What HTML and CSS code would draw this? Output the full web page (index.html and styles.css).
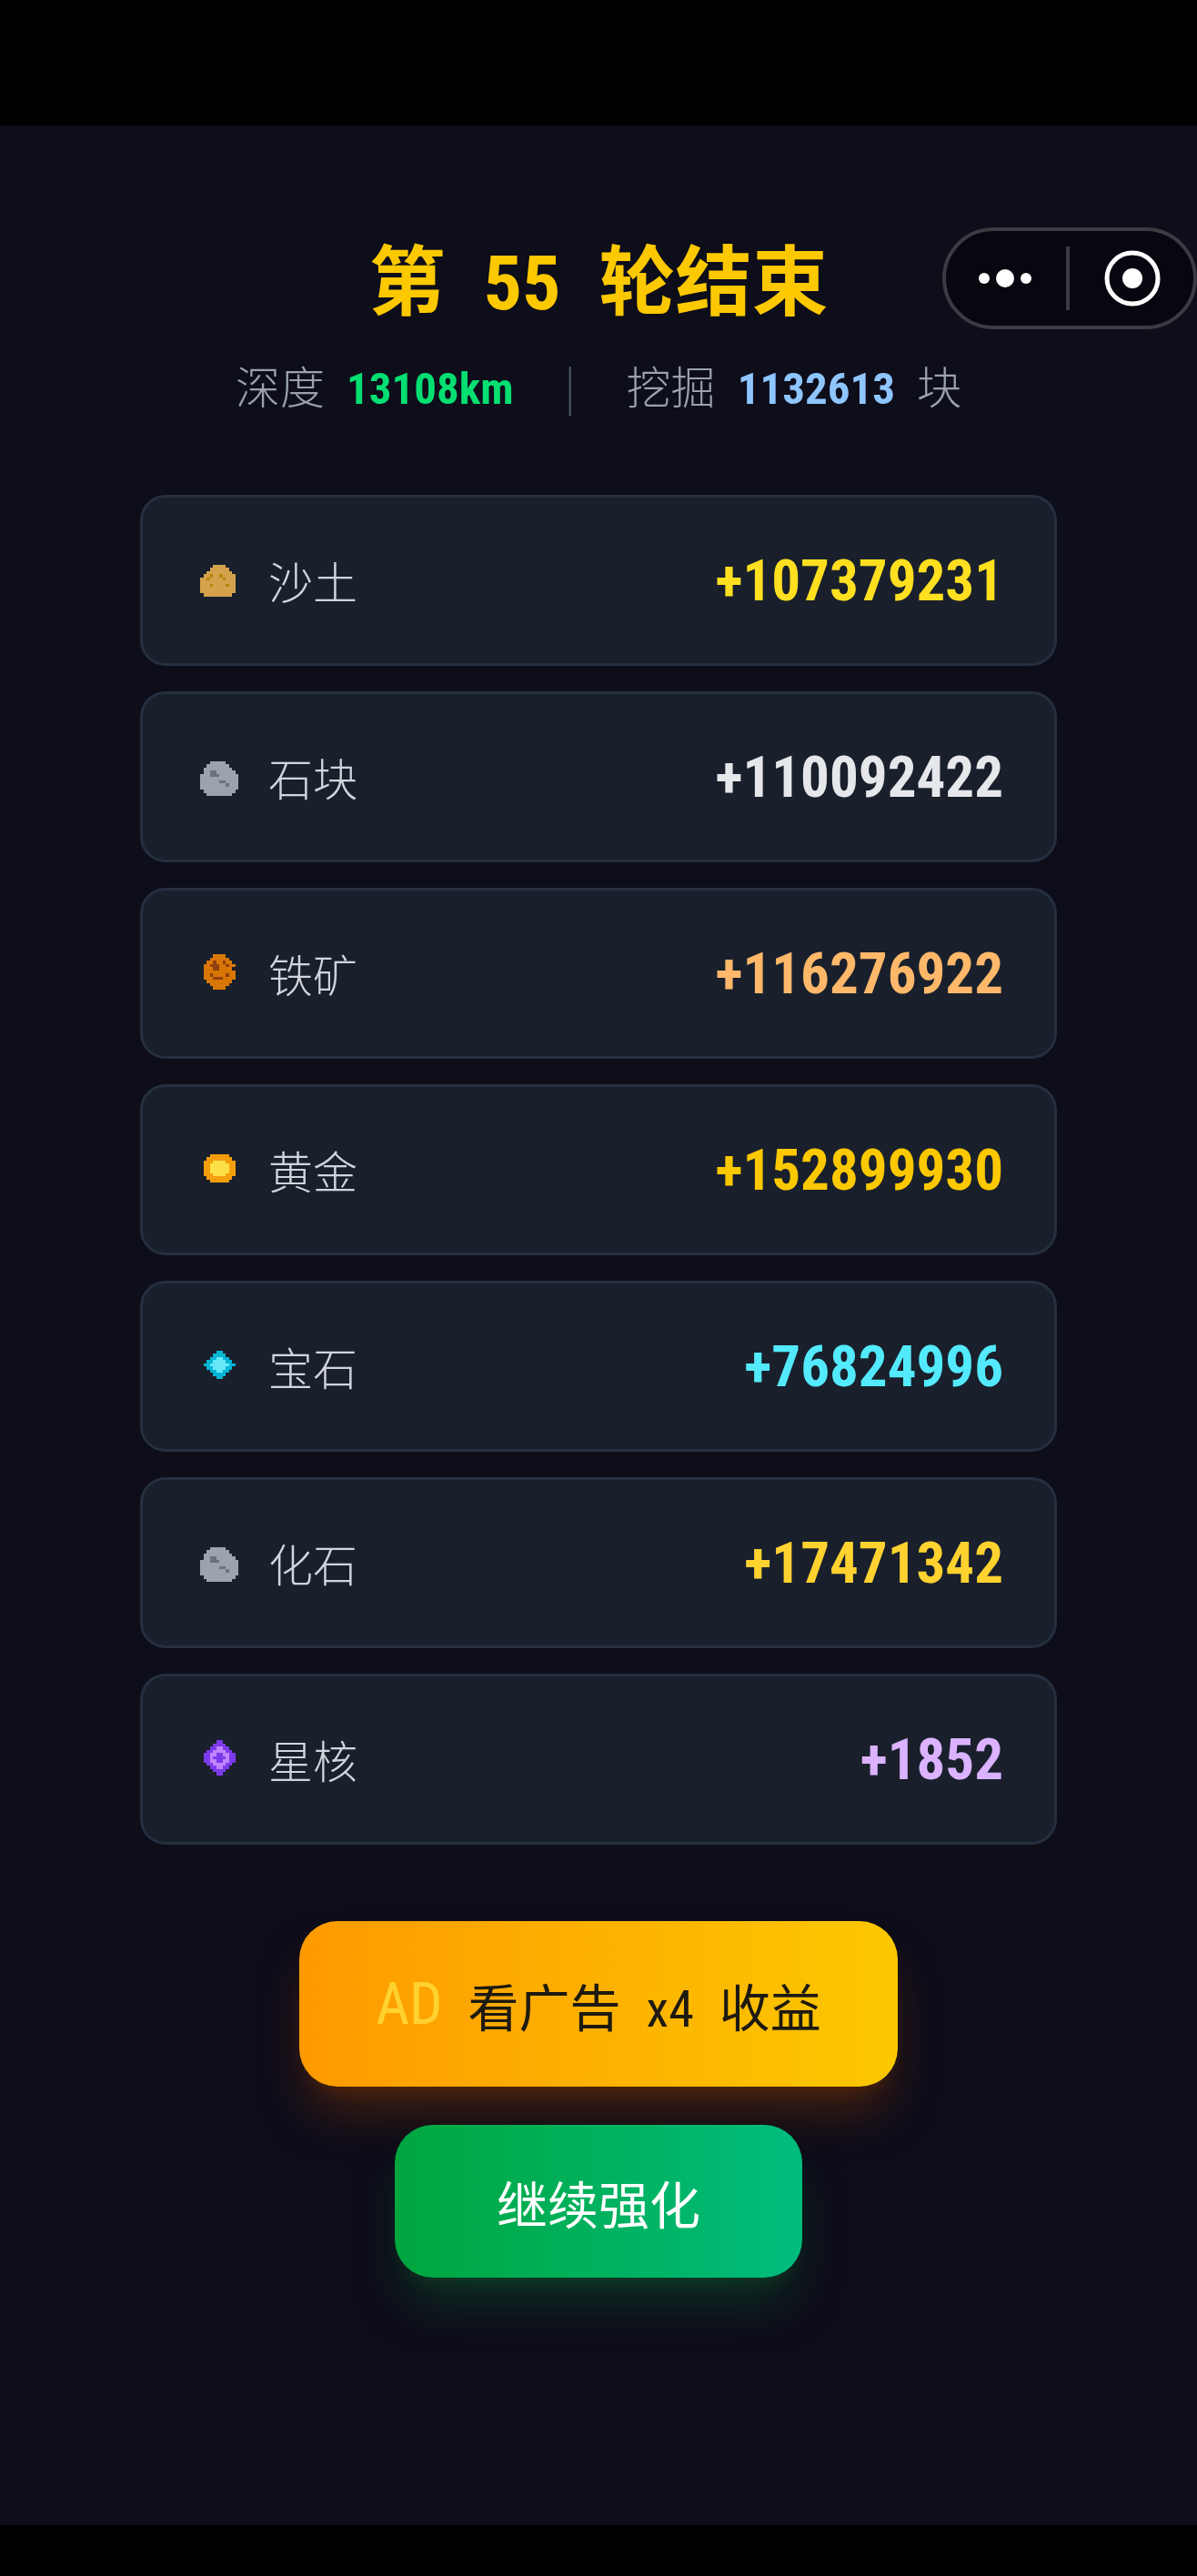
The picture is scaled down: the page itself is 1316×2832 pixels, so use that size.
FILE: index.html
```html
<!DOCTYPE html>
<html lang="zh-CN">
<head>
    <meta charset="UTF-8">
    <meta name="viewport" content="width=device-width, initial-scale=1.0">
    <title>第 55 轮结束</title>
    <link rel="stylesheet" href="styles.css">
</head>
<body>
    <!-- 16x16 像素图标 -->
    <svg class="sprites" aria-hidden="true">
        <symbol id="sand" viewBox="0 0 16 16">
            <path fill="#d4a24c" d="M6 3h4v1h1v1h1v1h1v6h-1v1H3v-1H2V7h1V6h1V5h1V4h1z"/>
            <path fill="#b8860b" d="M5 6h1v1H5zM8 6h1v1H8zM4 7h1v1H4zM9 7h1v1H9zM5 9h1v1H5zM10 9h1v1h-1z"/>
        </symbol>
        <symbol id="stone" viewBox="0 0 16 16">
            <path fill="#9ca3af" d="M5 3h5v1h1v1h1v1h1v1h1v5h-1v1h-1v1H4v-1H3v-1H2V7h1V5h1V4h1z"/>
            <path fill="#6b7280" d="M5 6h2v1h1v1H5zM8 9h2v1H8zM10 10h1v1h-1z"/>
        </symbol>
        <symbol id="iron" viewBox="0 0 16 16">
            <path fill="#d97706" d="M6 2h4v1h1v1h1v1h1v1h-1v1h1v3h-1v1h-1v1h-1v1H6v-1H5v-1H4v-1H3V5h1V4h1V3h1z"/>
            <path fill="#92400e" d="M6 4h1v1h1v2H6V6H5V5h1zM9 4h1v1H9zM10 5h1v1h-1zM5 8h1v1H5zM10 8h1v1h-1zM6 9h3v1H6z"/>
        </symbol>
        <symbol id="gold" viewBox="0 0 16 16">
            <path fill="#f59e0b" d="M5 3h6v1h1v1h1v5h-1v1h-1v1H5v-1H4v-1H3V5h1V4h1z"/>
            <path fill="#fde047" d="M6 5h4v1h1v3h-1v1H6V9H5V6h1z"/>
        </symbol>
        <symbol id="gem" viewBox="0 0 16 16">
            <path fill="#06b6d4" d="M7 3h2v1h1v1h1v1h1v1h1v1h-1v1h-1v1h-1v1H9v1H7v-1H6v-1H5V9H4V8H3V7h1V6h1V5h1V4h1z"/>
            <path fill="#67e8f9" d="M7 5h2v1h1v1h1v1h-1v1H9v1H7V9H6V8H5V7h1V6h1z"/>
        </symbol>
        <symbol id="core" viewBox="0 0 16 16">
            <path fill="#7c3aed" d="M7 2h2v1h1v1h1v1h1v1h1v3h-1v1h-1v1h-1v1H9v1H7v-1H6v-1H5v-1H4V9H3V6h1V5h1V4h1V3h1z"/>
            <path fill="#c084fc" d="M7 4h2v1h1v1h1v3h-1v1H9v1H7v-1H6V9H5V6h1V5h1z"/>
            <path fill="#7c3aed" d="M7 6h2v1h1v1H9v1H7V8H6V7h1z"/>
        </symbol>
    </svg>

    <div class="capsule">
        <button type="button" class="more" aria-label="更多">
            <svg width="60" height="64" viewBox="0 0 60 64" fill="#fff">
                <circle cx="6" cy="32" r="6"/><circle cx="29" cy="32" r="10"/><circle cx="52" cy="32" r="6"/>
            </svg>
        </button>
        <span class="capsule-line"></span>
        <button type="button" class="close" aria-label="关闭">
            <svg width="64" height="64" viewBox="0 0 64 64">
                <circle cx="33" cy="32" r="28" fill="none" stroke="#fff" stroke-width="5"/>
                <circle cx="33" cy="32" r="11" fill="#fff"/>
            </svg>
        </button>
    </div>

    <main class="result">
        <h1 class="title"><span>第</span><span class="num">55</span><span>轮结束</span></h1>
        <div class="stats">
            <p class="stat"><span>深度</span><b class="num depth">13108km</b></p>
            <span class="split">|</span>
            <p class="stat"><span>挖掘</span><b class="num blocks">1132613</b><span>块</span></p>
        </div>

        <ul class="loot">
            <li class="card"><svg class="icon"><use href="#sand"/></svg><span class="name">沙土</span><b class="num value sand">+107379231</b></li>
            <li class="card"><svg class="icon"><use href="#stone"/></svg><span class="name">石块</span><b class="num value stone">+110092422</b></li>
            <li class="card"><svg class="icon"><use href="#iron"/></svg><span class="name">铁矿</span><b class="num value iron">+116276922</b></li>
            <li class="card"><svg class="icon"><use href="#gold"/></svg><span class="name">黄金</span><b class="num value gold">+152899930</b></li>
            <li class="card"><svg class="icon"><use href="#gem"/></svg><span class="name">宝石</span><b class="num value gem">+76824996</b></li>
            <li class="card"><svg class="icon"><use href="#stone"/></svg><span class="name">化石</span><b class="num value fossil">+17471342</b></li>
            <li class="card"><svg class="icon"><use href="#core"/></svg><span class="name">星核</span><b class="num value core">+1852</b></li>
        </ul>

        <div class="actions">
            <button type="button" class="btn btn-ad">
                <span class="num ad">AD</span>
                <span class="ad-text"><span>看广告</span><span class="num">x4</span><span>收益</span></span>
            </button>
            <button type="button" class="btn btn-next">继续强化</button>
        </div>
    </main>
</body>
</html>
```

FILE: styles.css
```css
* {
    box-sizing: border-box;
}
body {
    margin: 0;
    min-height: 100vh;
    display: flex;
    flex-direction: column;
    position: relative;
    font-family: "Noto Sans CJK SC", sans-serif;
    background: #0e0d1a;
    border-top: 138px solid #000;
    border-bottom: 56px solid #000;
}
h1, p, ul {
    margin: 0;
    padding: 0;
}
button {
    font-family: inherit;
    border: none;
    padding: 0;
    cursor: pointer;
}
.sprites {
    position: absolute;
    width: 0;
    height: 0;
}
.num {
    font-family: "Roboto Condensed", "Liberation Sans Narrow", Roboto, sans-serif;
}

/* 右上角胶囊按钮 */
.capsule {
    position: absolute;
    top: 112px;
    right: 0;
    width: 280px;
    height: 112px;
    display: flex;
    align-items: center;
    border: 4px solid #3c3b42;
    border-radius: 56px;
    background: #06070f;
}
.capsule button {
    display: flex;
    justify-content: center;
    background: none;
}
.more {
    width: 132px;
}
.close {
    flex: 1;
}
.capsule-line {
    width: 4px;
    height: 70px;
    background: #3c3b42;
}

.result {
    flex: 1;
    padding: 110px 154px 0;
}
.title {
    display: flex;
    justify-content: center;
    align-items: baseline;
    gap: 42px;
    font-size: 84px;
    line-height: 112px;
    font-weight: 700;
    color: #fcc800;
}
.stats {
    display: flex;
    justify-content: center;
    gap: 52px;
    margin-top: 20px;
    font-size: 49px;
    line-height: 70px;
    font-weight: 300;
    color: #99a1af;
}
.stat {
    display: flex;
    align-items: baseline;
    gap: 24px;
}
.stat b {
    font-weight: 700;
}
.split {
    width: 20px;
    text-align: center;
    color: #4a5565;
}
.depth {
    color: #05df72;
}
.blocks {
    color: #8ec5ff;
}

.loot {
    display: grid;
    gap: 28px;
    margin-top: 81px;
    list-style: none;
}
.card {
    display: flex;
    align-items: center;
    gap: 26px;
    height: 188px;
    padding: 0 56px;
    background: #19202c;
    border: 3px solid #252f40;
    border-radius: 28px;
}
.icon {
    width: 56px;
    height: 56px;
    shape-rendering: crispEdges;
}
.name {
    font-size: 49px;
    font-weight: 300;
    line-height: 70px;
    color: #d1d5dc;
}
.value {
    margin-left: auto;
    font-size: 63px;
}
.value.sand { color: #ffdf20; }
.value.stone { color: #e5e7eb; }
.value.iron { color: #ffb86a; }
.value.gold { color: #fcc800; }
.value.gem { color: #53eafd; }
.value.fossil { color: #ffd230; }
.value.core { color: #dab2ff; }

.actions {
    display: flex;
    flex-direction: column;
    align-items: center;
    gap: 42px;
    margin-top: 84px;
}
.btn {
    font-size: 56px;
    border-radius: 42px;
}
.btn-ad {
    display: flex;
    align-items: center;
    gap: 28px;
    height: 182px;
    padding: 0 84px;
    color: #1e1a10;
    background: linear-gradient(to right, #fe9a00, #fcc800);
    box-shadow: 0 35px 52px -10px rgba(123, 51, 6, 0.5), 0 14px 21px -14px rgba(123, 51, 6, 0.5);
}
.ad {
    font-size: 64px;
    color: #ffd230;
}
.ad-text {
    display: flex;
    align-items: baseline;
    gap: 28px;
}
.btn-next {
    height: 168px;
    padding: 0 112px;
    color: #fff;
    background: linear-gradient(to right, #00a63e, #00bc7d);
    box-shadow: 0 35px 52px -10px rgba(13, 84, 43, 0.5), 0 14px 21px -14px rgba(13, 84, 43, 0.5);
}
```
